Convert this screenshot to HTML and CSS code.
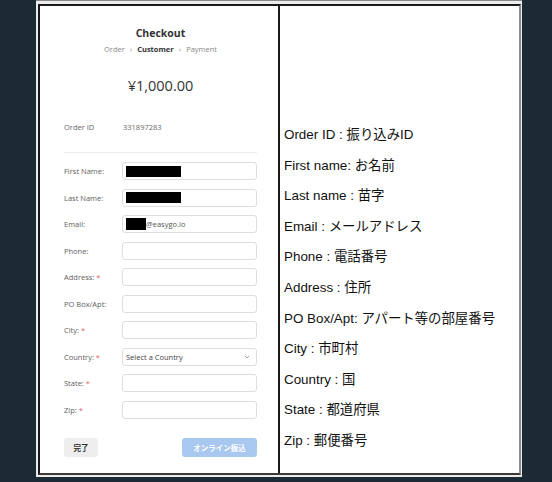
FILE: index.html
```html
<!DOCTYPE html>
<html lang="ja">
<head>
    <meta charset="UTF-8">
    <title>Checkout fields</title>
    <link rel="stylesheet" href="styles.css">
</head>
<body>
<div class="sheet">
    <div class="frame">
        <div class="checkout">
            <p class="title">Checkout</p>
            <p class="crumbs">
                <span>Order</span><span class="sep">&rsaquo;</span><b>Customer</b><span class="sep">&rsaquo;</span><span>Payment</span>
            </p>
            <p class="price">¥1,000.00</p>
            <div class="order-id">
                <span class="label">Order ID</span>
                <span class="value">331897283</span>
            </div>
            <hr class="rule">
            <div class="fields">
                <div class="row"><label>First Name:</label><div class="box"><span class="redact wide"></span></div></div>
                <div class="row"><label>Last Name:</label><div class="box"><span class="redact wide"></span></div></div>
                <div class="row"><label>Email:</label><div class="box"><span class="redact small"></span>@easygo.io</div></div>
                <div class="row"><label>Phone:</label><div class="box"></div></div>
                <div class="row"><label>Address: <i>*</i></label><div class="box"></div></div>
                <div class="row"><label>PO Box/Apt:</label><div class="box"></div></div>
                <div class="row"><label>City: <i>*</i></label><div class="box"></div></div>
                <div class="row"><label>Country: <i>*</i></label><div class="box select">Select a Country
                    <svg class="chev" width="6" height="4" viewBox="0 0 6 4"><path d="M0.8 0.8 L3 3 L5.2 0.8" fill="none" stroke="#999" stroke-width="0.9"/></svg>
                </div></div>
                <div class="row"><label>State: <i>*</i></label><div class="box"></div></div>
                <div class="row"><label>Zip: <i>*</i></label><div class="box"></div></div>
            </div>
            <div class="actions">
                <button class="done">完了</button>
                <button class="pay">オンライン振込</button>
            </div>
        </div>
        <div class="notes">
            <p>Order ID : 振り込みID</p>
            <p>First name: お名前</p>
            <p>Last name : 苗字</p>
            <p>Email : メールアドレス</p>
            <p>Phone : 電話番号</p>
            <p>Address : 住所</p>
            <p>PO Box/Apt: アパート等の部屋番号</p>
            <p>City : 市町村</p>
            <p>Country : 国</p>
            <p>State : 都道府県</p>
            <p>Zip : 郵便番号</p>
        </div>
    </div>
</div>
</body>
</html>
```

FILE: styles.css
```css
html, body {
    margin: 0;
    height: 100%;
    overflow: hidden;
}

body {
    background-color: #1c2a36;
}

.sheet {
    margin-left: 36px;
    width: 486px;
    height: 477px;
    box-sizing: border-box;
    padding: 3px 1px 2px 2px;
    background-color: #ececec;
    border-top: 1px solid #8a8a8a;
}

.frame {
    display: grid;
    grid-template-columns: 240px 1fr;
    height: 100%;
    box-sizing: border-box;
    background: #fff;
    border: 2px solid #1a1a1a;
    border-right-color: #8e8e8e;
    border-bottom-color: #3a3a3a;
}

/* left: the checkout form */
.checkout {
    border-right: 2px solid #1a1a1a;
    font-family: "Open Sans", "Noto Sans CJK JP", sans-serif;
    color: #333;
    padding: 0 21px 0 24px;
}

.checkout p {
    margin: 0;
    text-align: center;
}

.title {
    font-size: 10.5px;
    font-weight: bold;
    line-height: 14px;
    padding-top: 20px;
}

.crumbs {
    font-size: 7.5px;
    line-height: 10px;
    margin-top: 4px !important;
    color: #888;
}

.crumbs b {
    color: #333;
}

.crumbs .sep {
    margin: 0 5px;
    font-size: 8px;
}

.price {
    font-size: 14.5px;
    line-height: 20px;
    margin-top: 22px !important;
    color: #333;
}

.order-id {
    display: flex;
    font-size: 7.5px;
    color: #666;
    margin-top: 26px;
    line-height: 10px;
}

.order-id .label {
    width: 59px;
}

.rule {
    border: 0;
    border-top: 1px solid #ececec;
    margin: 20px 0 9px 0;
}

.fields {
    display: flex;
    flex-direction: column;
    gap: 8.5px;
}

.row {
    display: flex;
    align-items: center;
    height: 18px;
}

.row label {
    width: 58px;
    font-size: 7.5px;
    color: #5e5e5e;
}

.row label i {
    font-style: normal;
    color: #e0606a;
}

.box {
    flex: 1;
    height: 18px;
    box-sizing: border-box;
    border: 1px solid #dedede;
    border-radius: 3px;
    display: flex;
    align-items: center;
    padding-left: 3px;
    font-size: 7.5px;
    color: #555;
}

.redact {
    display: inline-block;
    background: #000;
    height: 11px;
}

.redact.wide {
    width: 55px;
}

.redact.small {
    width: 20px;
    height: 12px;
}

.select {
    justify-content: space-between;
    padding-right: 6px;
    color: #444;
}

.actions {
    display: flex;
    justify-content: space-between;
    margin-top: 19px;
}

.actions button {
    height: 19px;
    border: 0;
    border-radius: 3px;
    font-family: "Noto Sans CJK JP", sans-serif;
    font-size: 7.5px;
    font-weight: bold;
    padding: 0;
}

.done {
    width: 34px;
    background: #eeeeee;
    color: #333;
}

.pay {
    width: 75px;
    background: #a9c8f0;
    color: #fff;
}

/* right: field notes */
.notes {
    padding: 114px 0 0 4px;
    font-family: "Liberation Sans", "Noto Sans CJK JP", sans-serif;
    font-size: 13.4px;
    color: #111;
}

.notes p {
    margin: 0;
    line-height: 30.6px;
}
```
